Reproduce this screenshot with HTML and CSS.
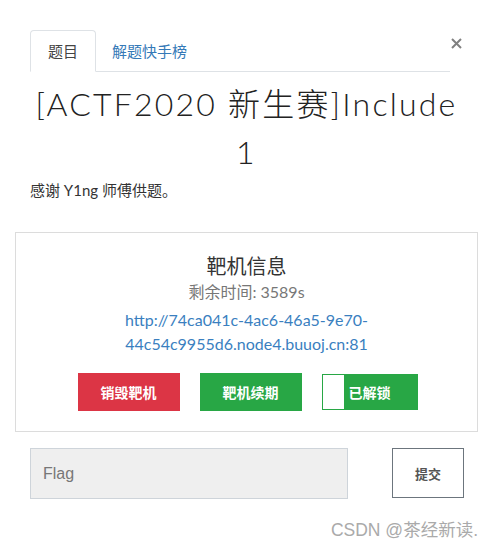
FILE: index.html
```html
<!DOCTYPE html>
<html lang="zh">
<head>
<meta charset="utf-8">
<link rel="stylesheet" href="styles.css">
</head>
<body>
<div class="modal">
  <div class="head">
    <ul class="tabs">
      <li class="tab active">题目</li>
      <li class="tab link">解题快手榜</li>
    </ul>
    <svg class="close" width="11" height="11" viewBox="0 0 11 11"><path d="M1 1 L10 10 M10 1 L1 10" stroke="#808080" stroke-width="2" fill="none"/></svg>
  </div>
  <h1 class="title">[ACTF2020 新生赛]Include<br>1</h1>
  <p class="desc">感谢 Y1ng 师傅供题。</p>
  <div class="box">
    <div class="box-title">靶机信息</div>
    <div class="time">剩余时间: 3589s</div>
    <a class="url">http://74ca041c-4ac6-46a5-9e70-<br>44c54c9955d6.node4.buuoj.cn:81</a>
    <div class="btns">
      <span class="btn red">销毁靶机</span>
      <span class="btn green">靶机续期</span>
      <span class="btn toggle"><span class="knob"></span><span class="tlabel">已解锁</span></span>
    </div>
  </div>
  <div class="flag-row">
    <div class="flag-input">Flag</div>
    <span class="submit">提交</span>
  </div>
  <div class="wm">CSDN @茶经新读.</div>
</div>
</body>
</html>
```
FILE: styles.css
```css
* { box-sizing: border-box; }
body { margin: 0; background: #fff; font-family: Lato, "Noto Sans CJK SC", sans-serif; color: #333; }
.modal { width: 494px; padding: 30px 16px 0 15px; }
.head { display: flex; align-items: flex-start; padding-left: 15px; }
.tabs { list-style: none; margin: 0; padding: 0; display: flex; width: 420px; border-bottom: 1px solid #dee2e6; height: 42px; }
.tab { font-size: 15px; height: 42px; line-height: 42px; }
.tab.active { border: 1px solid #dee2e6; border-bottom-color: #fff; border-radius: 4px 4px 0 0; color: #444; height: 42px; width: 66px; padding: 0; text-align: center; line-height: 41px; }
.tab.link { color: #3479b7; padding: 0 16px; }
.close { margin-left: 1px; margin-top: 8px; flex: none; }
.title { font-family: Lato, "Noto Sans CJK SC", sans-serif; font-weight: 300; font-size: 32px; line-height: 48px; text-align: center; margin: 8px 0 0 0; color: #222; letter-spacing: 2.2px; }
.desc { font-size: 15px; margin: 4px 0 0 15px; color: #333; line-height: 20px; }
.box { margin-top: 32px; border: 1px solid #dcdcdc; height: 200px; text-align: center; padding-top: 21px; }
.box-title { font-size: 20px; line-height: 24px; color: #333; }
.time { font-size: 16px; color: #777; line-height: 24px; margin-top: 2px; }
.url { display: block; font-size: 16px; color: #3a7fbf; line-height: 24px; margin-top: 4px; }
.btns { display: flex; justify-content: center; gap: 20px; margin-top: 17px; padding-left: 2px; }
.btn { width: 102px; height: 38px; color: #fff; font-weight: bold; font-size: 14px; display: flex; align-items: center; justify-content: center; }
.red { background: #dc3545; }
.green { background: #28a745; }
.toggle { width: 96px; height: 36px; margin-top: 1px; background: #28a745; border: 1px solid #28a745; justify-content: flex-start; }
.knob { width: 21px; height: 34px; background: #fff; }
.tlabel { margin-left: 5px; }
.flag-row { display: flex; margin-top: 16px; padding-left: 15px; align-items: flex-start; }
.flag-input { width: 318px; height: 51px; background: #efefef; border: 1px solid #ced4da; color: #777; font-family: "Liberation Sans", Arial, sans-serif; font-size: 16px; padding-left: 12px; line-height: 49px; }
.submit { margin-left: 44px; width: 72px; height: 50px; border: 1px solid #6c757d; color: #555; font-weight: bold; font-size: 13px; display: flex; align-items: center; justify-content: center; }
.wm { text-align: right; font-family: "Liberation Sans", Arial, "Noto Sans CJK SC", sans-serif; color: #aaa; font-size: 17.5px; margin-top: 17px; padding-right: 0; }
```
